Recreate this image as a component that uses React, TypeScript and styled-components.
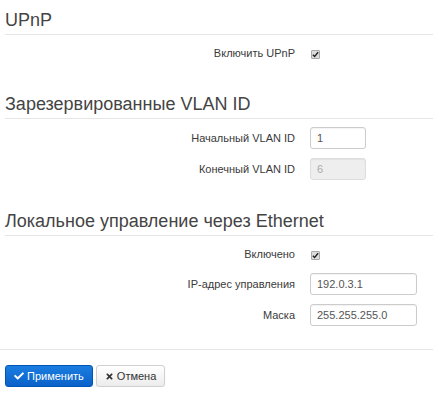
import React from "react";
import styled, { createGlobalStyle } from "styled-components";
import { FaCheck, FaTimes } from "react-icons/fa";

const Global = createGlobalStyle`
  html, body { margin: 0; padding: 0; background: #fff; }
  body { font-family: "Liberation Sans", Arial, sans-serif; color: #333; }
  * { box-sizing: border-box; }
`;

const Page = styled.div`
  width: 433px;
  padding-top: 10px;
`;

const Section = styled.section`
  padding-left: 5px;
  margin-bottom: 31px;
`;

const Heading = styled.h2`
  margin: 0;
  font-size: 18px;
  font-weight: normal;
  line-height: 20px;
  color: #444;
  padding-bottom: 4px;
  border-bottom: 1px solid #e5e5e5;
`;

const Rows = styled.div`
  display: flex;
  flex-direction: column;
  gap: 9px;
  padding-top: 8px;
`;

const Row = styled.div<{ $h: number }>`
  display: grid;
  grid-template-columns: 290px 1fr;
  column-gap: 15px;
  align-items: center;
  height: ${(p) => p.$h}px;
`;

const Label = styled.label`
  text-align: right;
  font-size: 11px;
  color: #3a3a3a;
`;

const Check = styled.span`
  display: inline-flex;
  align-items: center;
  justify-content: center;
  width: 9px;
  height: 9px;
  margin-left: 1px;
  margin-top: 1px;
  border: 1px solid #a8a8a8;
  border-radius: 1px;
  background: #dcdcdc;
  color: #222;
`;

const Input = styled.input<{ $w: number }>`
  width: ${(p) => p.$w}px;
  height: 22px;
  padding: 0 6px;
  font-family: "Liberation Sans", Arial, sans-serif;
  font-size: 11px;
  color: #555;
  border: 1px solid #ccc;
  border-radius: 3px;
  background: #fff;
  box-shadow: inset 0 1px 1px rgba(0, 0, 0, 0.05);
  outline: none;
  &:disabled {
    background: #eee;
    color: #aaa;
    border-color: #ddd;
  }
`;

const Footer = styled.div`
  border-top: 1px solid #e5e5e5;
  margin-top: -8px;
  padding: 15px 5px 0;
  display: flex;
  gap: 3px;
`;

const Button = styled.button<{ $primary?: boolean }>`
  height: 22px;
  padding: 0 ${(p) => (p.$primary ? 8 : 8)}px;
  display: inline-flex;
  align-items: center;
  gap: 3px;
  font-family: "Liberation Sans", Arial, sans-serif;
  font-size: 11px;
  border-radius: 3px;
  cursor: pointer;
  color: ${(p) => (p.$primary ? "#fff" : "#333")};
  border: 1px solid ${(p) => (p.$primary ? "#0055b5" : "#d0d0d0")};
  background: ${(p) =>
    p.$primary
      ? "linear-gradient(to bottom, #1b7de0 0%, #0a62c9 100%)"
      : "linear-gradient(to bottom, #ffffff 0%, #ececec 100%)"};
  box-shadow: 0 1px 1px rgba(0, 0, 0, 0.08);
  svg { flex-shrink: 0; }
`;

const CheckBox = () => (
  <Check>
    <svg width="7" height="7" viewBox="0 0 8 8">
      <path d="M1 4.2 L3 6.2 L7 1.5" fill="none" stroke="#222" strokeWidth="1.6" />
    </svg>
  </Check>
);

export default function App() {
  return (
    <Page>
      <Global />
      <Section>
        <Heading>UPnP</Heading>
        <Rows>
          <Row $h={20}>
            <Label>Включить UPnP</Label>
            <div><CheckBox /></div>
          </Row>
        </Rows>
      </Section>
      <Section>
        <Heading>Зарезервированные VLAN ID</Heading>
        <Rows>
          <Row $h={22}>
            <Label>Начальный VLAN ID</Label>
            <div><Input $w={56} defaultValue="1" /></div>
          </Row>
          <Row $h={22}>
            <Label>Конечный VLAN ID</Label>
            <div><Input $w={56} defaultValue="6" disabled /></div>
          </Row>
        </Rows>
      </Section>
      <Section>
        <Heading>Локальное управление через Ethernet</Heading>
        <Rows>
          <Row $h={20}>
            <Label>Включено</Label>
            <div><CheckBox /></div>
          </Row>
          <Row $h={22}>
            <Label>IP-адрес управления</Label>
            <div><Input $w={107} defaultValue="192.0.3.1" /></div>
          </Row>
          <Row $h={22}>
            <Label>Маска</Label>
            <div><Input $w={107} defaultValue="255.255.255.0" /></div>
          </Row>
        </Rows>
      </Section>
      <Footer>
        <Button $primary>
          <FaCheck size={10} /> Применить
        </Button>
        <Button>
          <FaTimes size={9} /> Отмена
        </Button>
      </Footer>
    </Page>
  );
}
